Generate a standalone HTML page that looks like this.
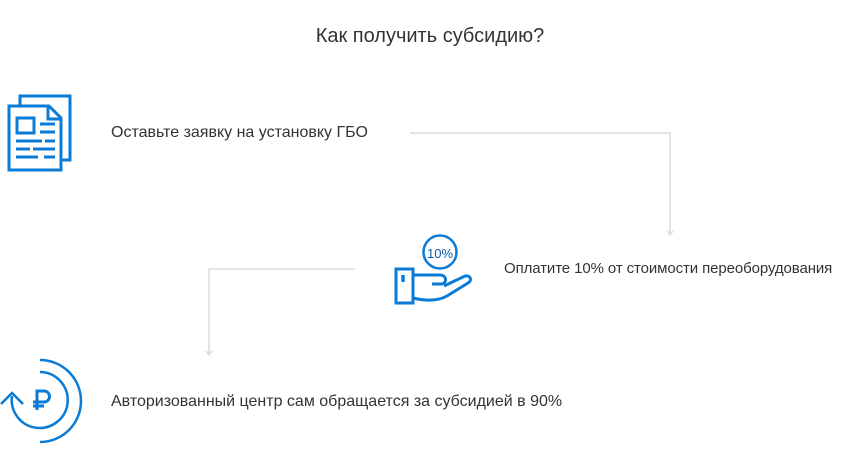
<!DOCTYPE html>
<html><head><meta charset="utf-8"><style>
body{margin:0;width:860px;height:474px;background:#fff;position:relative;overflow:hidden;font-family:"Liberation Sans",sans-serif;color:#333}
.t{position:absolute;white-space:nowrap;font-size:16px}
</style></head><body>
<div class="t" style="left:0;width:860px;text-align:center;top:25px;font-size:20px">Как получить субсидию?</div>
<div class="t" style="left:111px;top:124px">Оставьте заявку на установку ГБО</div>
<div class="t" style="left:504px;top:260px;font-size:15px;letter-spacing:-0.1px">Оплатите 10% от стоимости переоборудования</div>
<div class="t" style="left:111px;top:393px">Авторизованный центр сам обращается за субсидией в 90%</div>
<svg width="860" height="474" style="position:absolute;left:0;top:0">
<g stroke="#dcdcdc" stroke-width="1.5" fill="none">
<path d="M410 133H670V235M667 231L670 235L673 231"/>
<path d="M355 269H209V355M206 351L209 355L212 351"/>
</g>
<g stroke="#0a7bd6" stroke-width="3" fill="none">
<path d="M20 105V96H70V160H62"/>
<path d="M9 106H49L61 118V170H9Z"/>
<path d="M48 106V119H61"/>
<rect x="17" y="118" width="17" height="15"/>
<path d="M40 124H55M40 132H55M16 141H42M45 141H55M16 149H30M33 149H55M16 157H38M44 157H55"/>
<circle cx="440" cy="252" r="16.5" stroke-width="2.5"/>
<rect x="396" y="269" width="17" height="34"/>
<path d="M413 275H440C446 275 448 282 442 284H432M413 298C430 302 440 300 447 296L468 283C473 280 470 275 465 276L444 286"/>
<path d="M403 275V282" stroke-width="3.5"/>
<path d="M40 372A28 28 0 1 1 12 396" stroke-width="2.5"/>
<path d="M40 360A41 41 0 0 1 40 442" stroke-width="2.5"/>
<path d="M1 404L12 393L23 404" stroke-width="2.5"/>
<path d="M37 410V391H44A5.5 5.5 0 0 1 44 402H33M33 406H44" stroke-width="3"/>
</g>
<text x="440" y="258" font-family="Liberation Sans,sans-serif" font-size="13" fill="#0a5aa8" text-anchor="middle">10%</text>
</svg>
</body></html>
